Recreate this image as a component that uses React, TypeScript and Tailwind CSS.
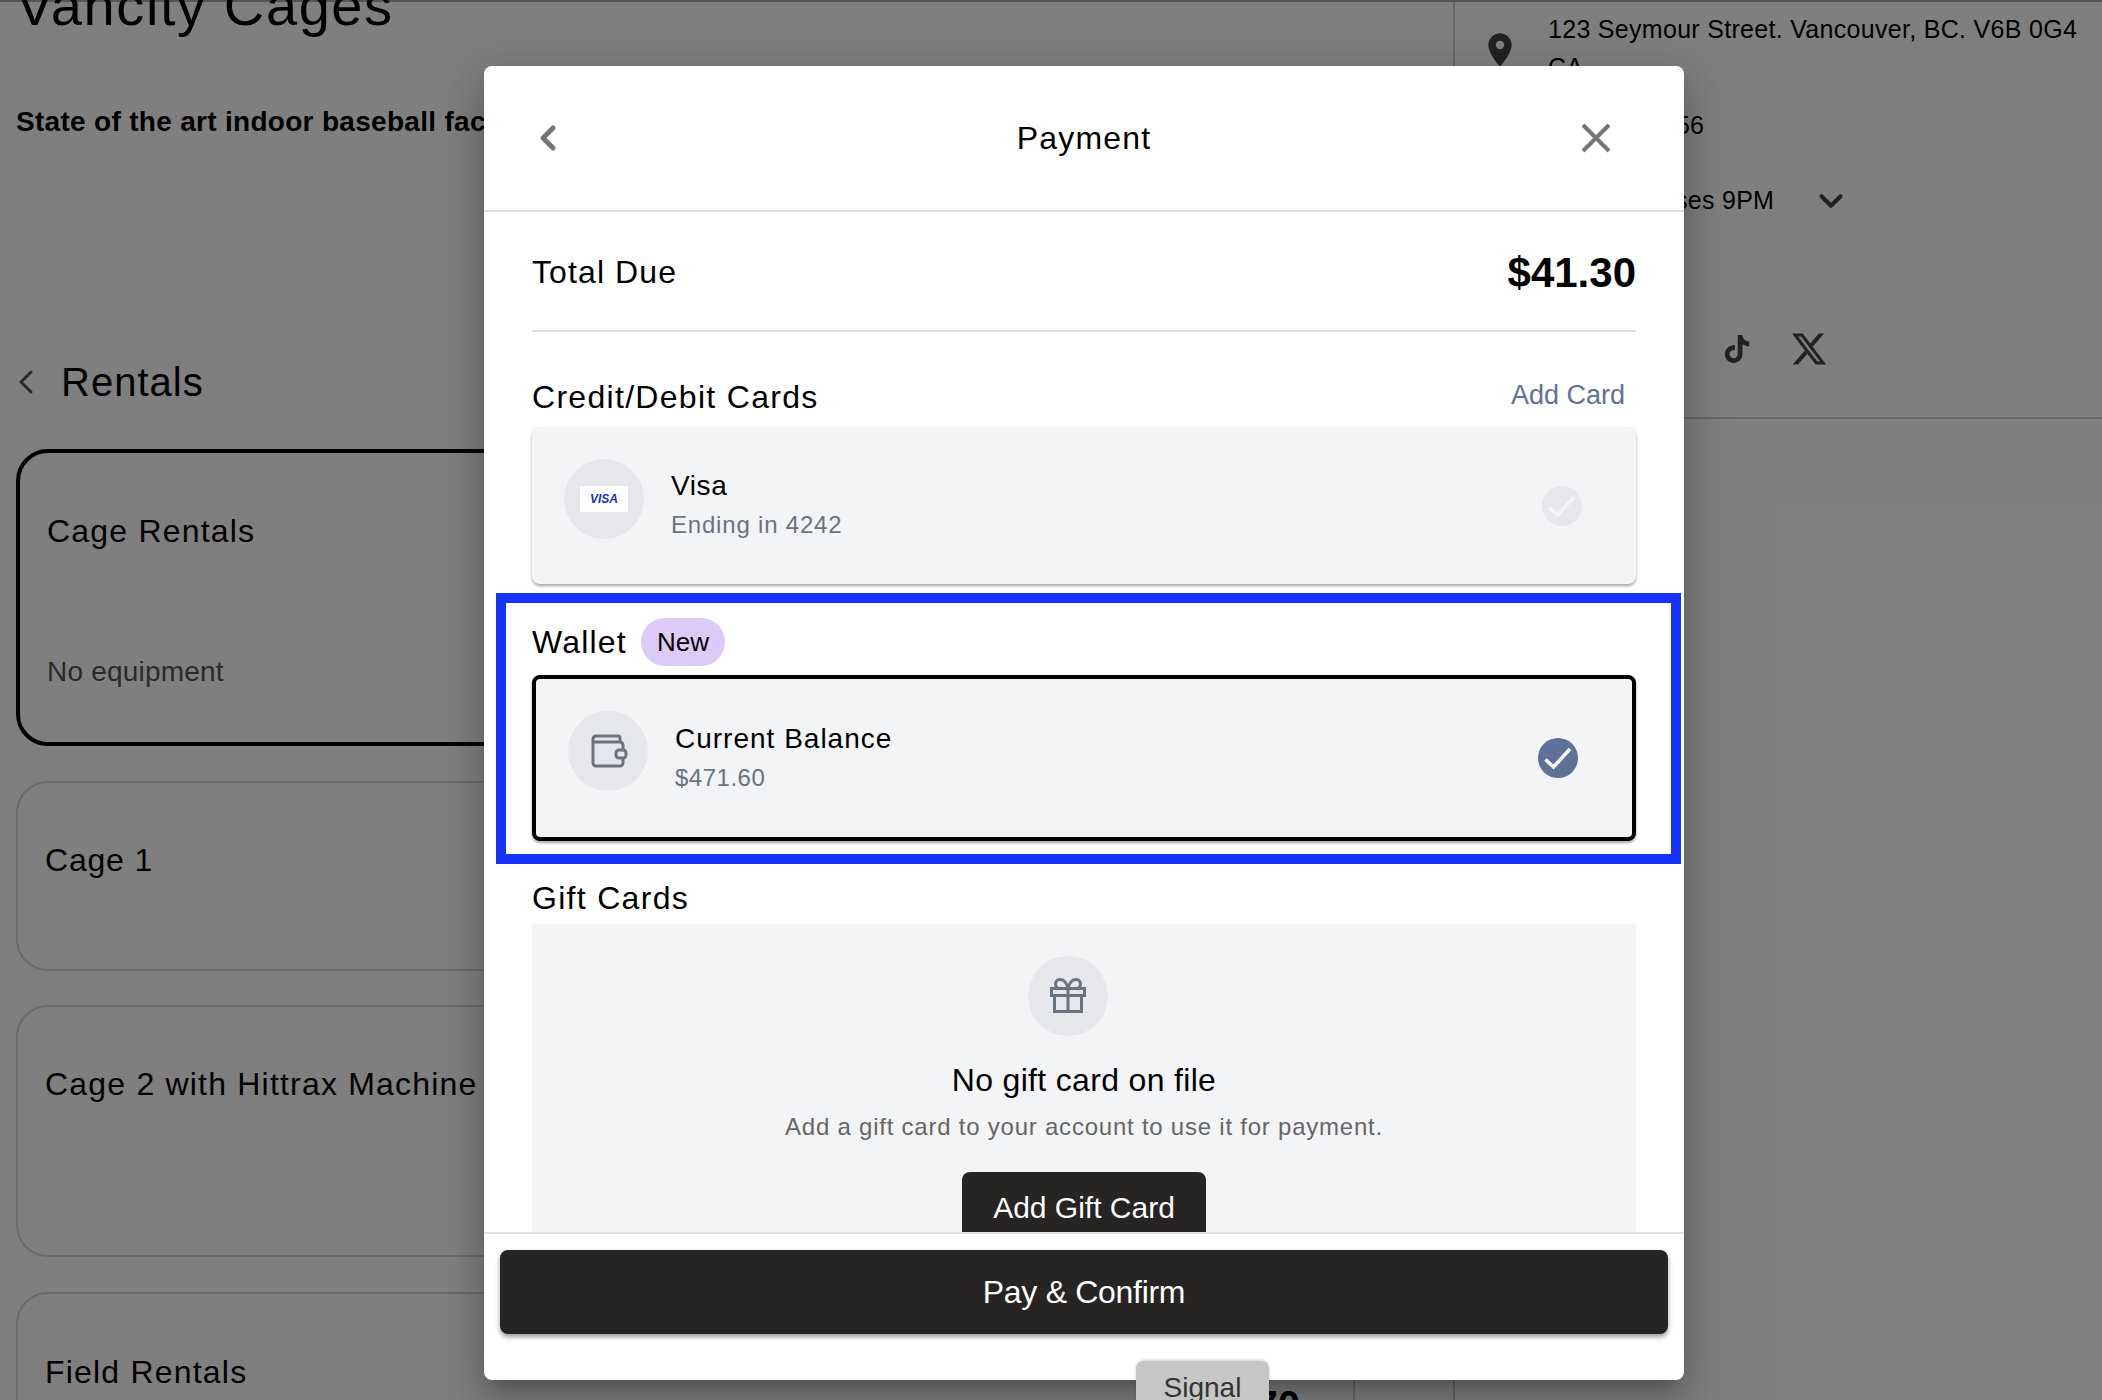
import React from "react";
import { ChevronLeft, ChevronDown } from "lucide-react";
import { FaTiktok } from "react-icons/fa";
import { MdLocationOn } from "react-icons/md";

function Check({ className }: { className: string }) {
  return (
    <div className={`w-10 h-10 shrink-0 rounded-full ${className}`}>
      <svg width="40" height="40" viewBox="0 0 40 40" fill="none">
        <path d="M7.5 21.5l8 7.5L32 11" stroke="currentColor" strokeWidth="3.5" />
      </svg>
    </div>
  );
}

function WalletIcon() {
  return (
    <svg className="ml-[3px]" width="38" height="36" viewBox="0 0 38 36" fill="none" stroke="#6b7280" strokeWidth="3">
      <path d="M2 6a3 3 0 0 1 3-3h22a2 2 0 0 1 2 2v4" />
      <path d="M2 6v24a3 3 0 0 0 3 3h24a3 3 0 0 0 3-3v-5" />
      <path d="M32 17v-5a3 3 0 0 0-3-3H3" />
      <rect x="25" y="17" width="10" height="8" rx="3" />
    </svg>
  );
}

function GiftIcon() {
  return (
    <svg width="40" height="40" viewBox="0 0 40 40" fill="none" stroke="#6b7280" strokeWidth="3">
      <rect x="3.5" y="12.5" width="33" height="7" />
      <path d="M6.5 19.5V35.5H33.5V19.5" />
      <path d="M20 12.5V35.5" />
      <path d="M20 12.5c-1-5-4-9-7.5-9a4.5 4.5 0 0 0-1 9" />
      <path d="M20 12.5c1-5 4-9 7.5-9a4.5 4.5 0 0 1 1 9" />
    </svg>
  );
}

function XLogo() {
  return (
    <svg width="38" height="38" viewBox="0 0 24 24" fill="#444">
      <path d="M18.244 2.25h3.308l-7.227 8.26 8.502 11.24H16.17l-5.214-6.817L4.99 21.75H1.68l7.73-8.835L1.254 2.25H8.08l4.713 6.231zm-1.161 17.52h1.833L7.084 4.126H5.117z" />
    </svg>
  );
}

function Background() {
  return (
    <div className="h-[1400px] overflow-hidden bg-white text-black">
      <div className="h-[2px] bg-[#aaaaaa]" />
      <div className="flex h-[1398px]">
        <div className="w-[1453px] shrink-0 pl-4 pr-[98px]">
          <div className="-mt-[32px] text-[56px] leading-[72px] tracking-[1.6px]">Vancity Cages</div>
          <div className="mt-[62px] text-[28px] leading-[36px] font-bold tracking-[0.3px] whitespace-nowrap">State of the art indoor baseball facility</div>
          <div className="mt-[218px] flex items-center h-[48px]">
            <ChevronLeft size={40} strokeWidth={1.8} className="text-[#555] -ml-[10px]" />
            <span className="ml-[15px] text-[40px] tracking-[1px]">Rentals</span>
          </div>
          <div className="mt-[43px] h-[297px] rounded-[32px] border-4 border-black px-[27px] pt-[58px] text-[32px] tracking-[1.2px]">
            <div className="leading-[40px]">Cage Rentals</div>
            <div className="mt-[103px] text-[28px] leading-[36px] tracking-[0.2px] text-[#555]">No equipment</div>
          </div>
          <div className="mt-[35px] h-[190px] rounded-[32px] border-2 border-[#d8d8d8] px-[27px] pt-[57px] text-[32px] leading-[40px] tracking-[0.8px]">Cage 1</div>
          <div className="mt-[34px] h-[252px] rounded-[32px] border-2 border-[#d8d8d8] px-[27px] pt-[57px] text-[32px] leading-[40px] tracking-[1.2px]">Cage 2 with Hittrax Machine</div>
          <div className="mt-[35px] h-[200px] rounded-[32px] border-2 border-[#d8d8d8] px-[27px] pt-[58px] text-[32px] leading-[40px] tracking-[1.2px]">
            <div>Field Rentals</div>
            <div className="-mt-[11px] flex justify-end pr-[26px] text-[40px] leading-[48px] font-bold tracking-normal">$70</div>
          </div>
        </div>
        <div className="flex-1 border-l-2 border-[#d0d0d0]">
          <div className="h-[417px] border-b-2 border-[#d0d0d0] pl-[25px] text-[25px] tracking-[0.3px]">
            <div className="flex">
              <MdLocationOn size={40} className="text-[#444] mt-[28px] shrink-0" />
              <div className="ml-[28px] pt-[8px] leading-[38px] whitespace-nowrap">
                <div>123 Seymour Street. Vancouver, BC. V6B 0G4</div>
                <div>CA</div>
              </div>
            </div>
            <div className="mt-[20px] pl-[65px] leading-[38px]">604-123-4556</div>
            <div className="mt-[36px] flex items-center pl-[71px] leading-[38px] whitespace-nowrap">
              Open - Closes 9PM
              <ChevronDown size={38} strokeWidth={2.6} className="ml-[38px] mt-[2px] text-[#444]" />
            </div>
            <div className="mt-[110px] flex items-center pl-[243px]">
              <FaTiktok size={28} className="text-[#444]" />
              <div className="ml-[39px]"><XLogo /></div>
            </div>
          </div>
        </div>
      </div>
    </div>
  );
}

function Modal() {
  return (
    <div className="relative flex h-[1314px] w-[1200px] flex-col rounded-lg bg-white text-black shadow-[0_24px_38px_3px_rgba(0,0,0,0.14),0_9px_46px_8px_rgba(0,0,0,0.12),0_11px_15px_-7px_rgba(0,0,0,0.2)]">
      <div className="grid h-[146px] shrink-0 grid-cols-[1fr_auto_1fr] items-center border-b-2 border-[#e0e0e0] px-[44px]">
        <ChevronLeft size={40} strokeWidth={3} className="text-[#757575]" />
        <div className="text-[32px] tracking-[1.2px]">Payment</div>
        <svg className="mr-[26px] justify-self-end" width="36" height="36" viewBox="0 0 36 36" stroke="#757575" strokeWidth="4"><path d="M5 5l26 26M31 5L5 31" /></svg>
      </div>

      <div className="min-h-0 flex-1 overflow-hidden">
        <div className="mx-12 flex h-[120px] items-center justify-between border-b-2 border-[#e0e0e0] pt-[2px]">
          <span className="text-[32px] tracking-[1.1px]">Total Due</span>
          <span className="text-[42px] font-bold">$41.30</span>
        </div>
        <div className="mx-12 mt-[45px] flex h-[40px] items-center justify-between">
          <span className="text-[32px] tracking-[1.3px]">Credit/Debit Cards</span>
          <span className="mr-[11px] -mt-[4px] text-[27px] text-[#5e7299]">Add Card</span>
        </div>
        <div className="mx-12 mt-[10px] flex h-[157px] items-center rounded-lg bg-[#f3f4f6] pl-8 pr-[54px] shadow-[0_2px_3px_rgba(0,0,0,0.35)]">
          <div className="mb-[13px] flex h-20 w-20 shrink-0 items-center justify-center rounded-full bg-[#e5e7eb]">
            <div className="flex h-[26px] w-12 items-center justify-center bg-white text-[12px] font-bold italic text-[#1a34b8]">VISA</div>
          </div>
          <div className="ml-[27px] -mt-[1px] flex-1">
            <div className="text-[28px] leading-[40px] tracking-[0.6px]">Visa</div>
            <div className="text-[24px] leading-[38px] tracking-[0.8px] text-[#6b7280]">Ending in 4242</div>
          </div>
          <Check className="bg-[#e5e7eb] text-[#f3f4f6]" />
        </div>

        <div className="ml-3 mr-[3px] mt-[9px] h-[271px] border-[10px] border-[#1432fa] pl-[26px] pr-[35px]">
          <div className="mt-[15px] flex h-[48px] items-center">
            <span className="text-[32px] tracking-[1.2px]">Wallet</span>
            <span className="ml-[14px] flex h-[48px] w-[84px] items-center justify-center rounded-full bg-[#dccbf7] text-[26px]">New</span>
          </div>
          <div className="mt-[9px] flex h-[166px] items-center rounded-lg border-4 border-black bg-[#f3f4f6] pl-8 pr-[54px] shadow-[0_2px_3px_rgba(0,0,0,0.35)]">
            <div className="mb-[14px] flex h-20 w-20 shrink-0 items-center justify-center rounded-full bg-[#e5e7eb]">
              <WalletIcon />
            </div>
            <div className="ml-[27px] -mt-[1px] flex-1">
              <div className="text-[28px] leading-[40px] tracking-[1px]">Current Balance</div>
              <div className="text-[24px] leading-[38px] tracking-[0.5px] text-[#6b7280]">$471.60</div>
            </div>
            <Check className="bg-[#5e7299] text-white" />
          </div>
        </div>

        <div className="mx-12 mt-[14px] text-[32px] leading-[40px] tracking-[1.3px]">Gift Cards</div>
        <div className="mx-12 mt-[6px] flex h-[400px] flex-col items-center bg-[#f3f4f6] pt-8">
          <div className="-ml-8 flex h-20 w-20 items-center justify-center rounded-full bg-[#e5e7eb]">
            <GiftIcon />
          </div>
          <div className="mt-6 text-[32px] leading-[40px] tracking-[0.33px]">No gift card on file</div>
          <div className="mt-[7px] text-[24px] leading-[40px] tracking-[0.77px] text-[#666]">Add a gift card to your account to use it for payment.</div>
          <div className="mt-[25px] flex h-[84px] w-[244px] items-start justify-center rounded-lg bg-[#262524] pt-4 text-[30px] leading-[40px] text-white">Add Gift Card</div>
        </div>
      </div>

      <div className="h-[148px] shrink-0 border-t-2 border-[#e0e0e0] px-4 pt-4">
        <div className="flex h-[84px] items-center justify-center rounded-lg bg-[#262524] text-[32px] tracking-[-0.3px] text-white shadow-[0_3px_5px_rgba(0,0,0,0.4)]">Pay &amp; Confirm</div>
      </div>

      <div className="absolute left-[652px] top-[1295px] h-[60px] w-[133px] rounded-t-lg bg-[#c6c6c6] pt-[9px] text-center text-[28px] leading-[36px] text-[#333] shadow-[0_-1px_3px_rgba(0,0,0,0.2)]">Signal</div>
    </div>
  );
}

export default function App() {
  return (
    <div className="relative h-[1400px] w-[2102px] overflow-hidden font-['Liberation_Sans',Arial,sans-serif]">
      <Background />
      <div className="absolute inset-0 bg-black/50 pl-[484px] pt-[66px]">
        <Modal />
      </div>
    </div>
  );
}
